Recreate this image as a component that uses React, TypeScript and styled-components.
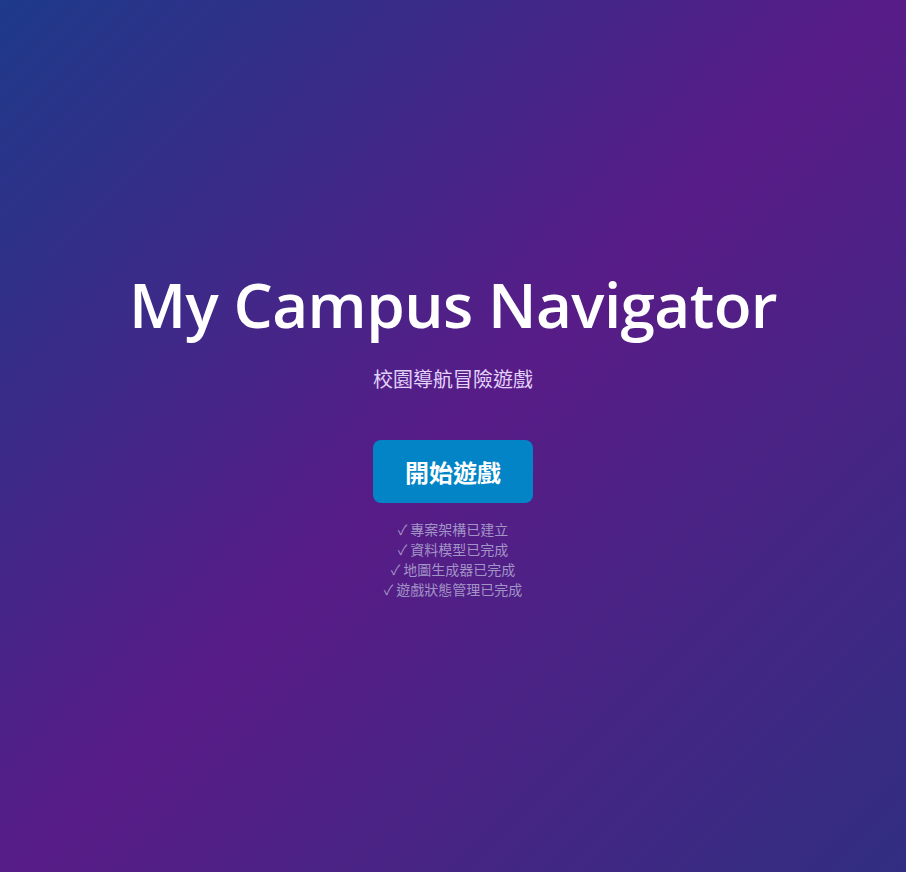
import React from "react";
import styled, { createGlobalStyle } from "styled-components";

const GlobalStyle = createGlobalStyle`
  html, body { margin: 0; padding: 0; }
  body {
    font-family: "Open Sans", "Noto Sans CJK TC", sans-serif;
  }
  * { box-sizing: border-box; }
`;

const Screen = styled.div`
  min-height: 100vh;
  display: flex;
  align-items: center;
  justify-content: center;
  background: linear-gradient(135deg, #1e3a8a 0%, #581c87 50%, #312e81 100%);
  color: #ffffff;
`;

const Center = styled.div`
  display: flex;
  flex-direction: column;
  align-items: center;
  text-align: center;
`;

const Title = styled.h1`
  margin: 0 0 30px;
  font-family: "Open Sans", "Noto Sans CJK TC", sans-serif;
  font-size: 62px;
  line-height: 1;
  font-weight: 600;
  letter-spacing: -0.6px;
  color: #ffffff;
`;

const Subtitle = styled.p`
  margin: 0 0 47px;
  font-family: "Noto Sans CJK TC", sans-serif;
  font-size: 20px;
  line-height: 28px;
  color: #e3d3fb;
`;

const StartButton = styled.button`
  border: none;
  border-radius: 8px;
  padding: 16px 32px;
  background: #0284c7;
  color: #ffffff;
  font-family: "Noto Sans CJK TC", sans-serif;
  font-size: 24px;
  line-height: 31px;
  font-weight: 700;
  cursor: pointer;
`;

const Checklist = styled.ul`
  list-style: none;
  margin: 16px 0 0;
  padding: 0;
  font-family: "Noto Sans CJK TC", sans-serif;
  font-size: 14px;
  line-height: 20px;
  color: #a294c6;
`;

const items = ["專案架構已建立", "資料模型已完成", "地圖生成器已完成", "遊戲狀態管理已完成"];

export default function App() {
  return (
    <>
      <GlobalStyle />
      <Screen>
        <Center>
          <Title>My Campus Navigator</Title>
          <Subtitle>校園導航冒險遊戲</Subtitle>
          <StartButton>開始遊戲</StartButton>
          <Checklist>
            {items.map((t) => (
              <li key={t}>✓ {t}</li>
            ))}
          </Checklist>
        </Center>
      </Screen>
    </>
  );
}
